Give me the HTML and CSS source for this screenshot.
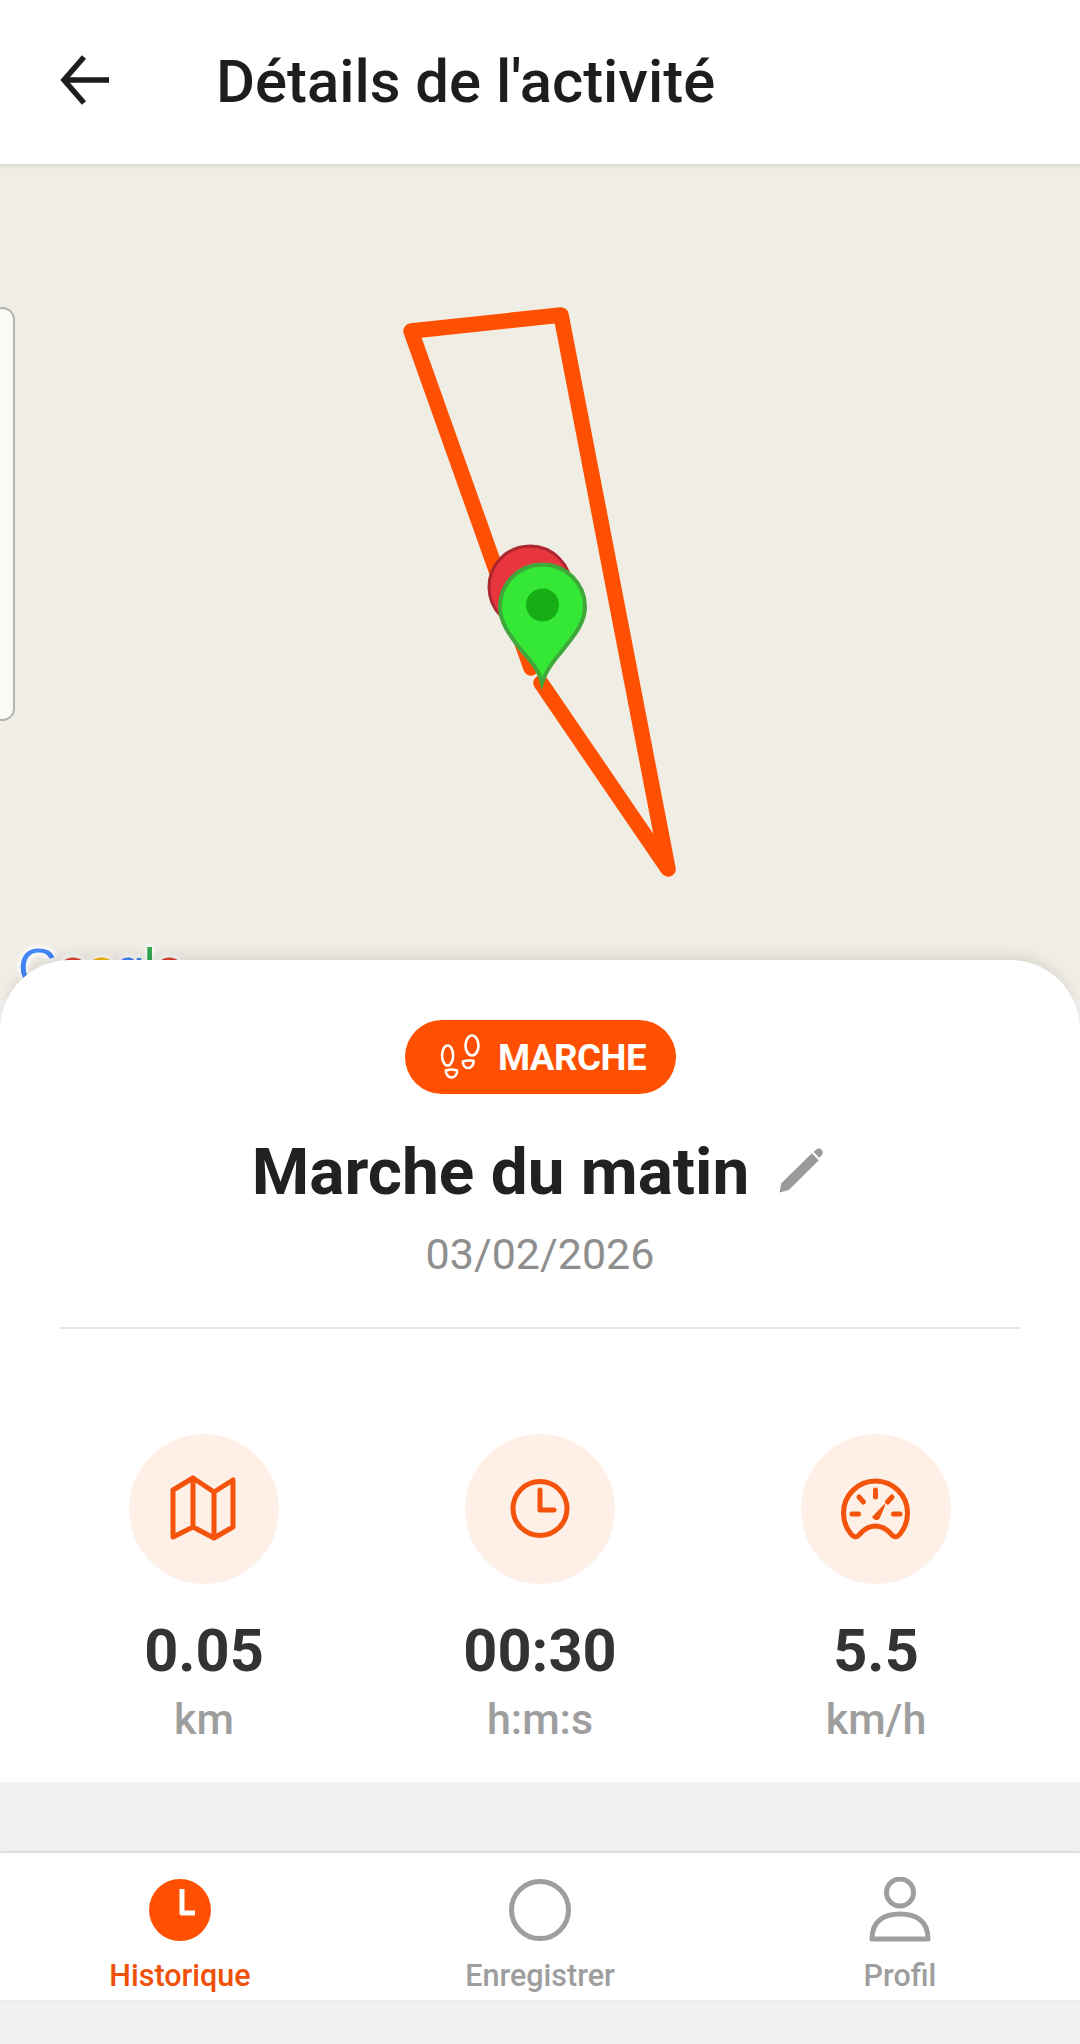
FILE: index.html
```html
<!DOCTYPE html>
<html lang="fr">
<head>
<meta charset="utf-8">
<title>Détails de l'activité</title>
<link rel="stylesheet" href="styles.css">
</head>
<body>
<div class="screen">
  <header class="topbar">
    <svg class="back" viewBox="0 0 50 50" width="50" height="50"><path d="M49 25H4M24 2 4 25l20 23" fill="none" stroke="#1d1d1f" stroke-width="5.500"/></svg>
    <h1 class="page-title">Détails de l'activité</h1>
  </header>

  <section class="map">
    <div class="map-control"></div>
    <div class="google"><span class="g-b">G</span><span class="g-r">o</span><span class="g-y">o</span><span class="g-b">g</span><span class="g-g">l</span><span class="g-r">e</span></div>
    <svg class="map-route" viewBox="0 164 1080 836" width="1080" height="836">
      <path d="M541 683 668 869 561 315 411 331 531 668" fill="none" stroke="#fe5000" stroke-width="15.500" stroke-linejoin="round" stroke-linecap="round"/>
      <circle cx="530" cy="587" r="41" fill="#e8363f" stroke="#ad2730" stroke-width="3"/>
      <path d="M542 683C539 670 530 660 522 651 512 638 500 624 500 607a42.500 42.500 0 0 1 85 0C585 624 572 638 562 651 554 660 546 670 542 683Z" fill="#35e835" stroke="#3ea93a" stroke-width="4"/>
      <circle cx="542.500" cy="605" r="16.500" fill="#16ad16"/>
    </svg>
  </section>

  <main class="panel">
    <div class="badge">
      <svg class="feet" viewBox="0 0 44 48" width="44" height="48" fill="none" stroke="#fff" stroke-width="2.600">
        <ellipse cx="9.600" cy="22.500" rx="5.500" ry="10"/>
        <path d="M8 37.500c3.500-1.200 8-1.200 11 0 .5 3.500-2 7-5.500 7s-6-3.500-5.500-7Z"/>
        <ellipse cx="34" cy="12.500" rx="6.500" ry="10"/>
        <path d="M25 28.500c3.500-1.200 7-1.200 10.500-.8.500 3.500-2 7.300-5.500 7.300s-5.500-3.500-5-6.500Z"/>
      </svg>
      <span class="badge-text">MARCHE</span>
    </div>
    <div class="title-row">
      <h2 class="activity-name">Marche du matin</h2>
      <svg class="pencil" viewBox="0 0 46 44" width="53" height="51"><path d="M4 41l1.500-8L32 7l6 6-26 26Z" fill="#9a9a9a"/><path d="M35 4.500c2-2 4-2 5.500-.5s1.500 3.500-.5 5.500l-1.500 1.500-5-5Z" fill="#9a9a9a"/></svg>
    </div>
    <div class="date">03/02/2026</div>
    <hr class="rule">
    <div class="stats">
      <div class="stat">
        <div class="stat-icon">
          <svg viewBox="0 0 150 150" width="150" height="150" fill="none" stroke="#f4530c" stroke-width="5" stroke-linejoin="round" stroke-linecap="round"><path d="M44 56 64 44l21 14 19-12v47l-19 11-21-11-20 10ZM64 44v49M85 58v46"/></svg>
        </div>
        <div class="stat-value">0.05</div>
        <div class="stat-unit">km</div>
      </div>
      <div class="stat">
        <div class="stat-icon">
          <svg viewBox="0 0 150 150" width="150" height="150" fill="none" stroke="#f4530c" stroke-width="5" stroke-linecap="round" stroke-linejoin="round"><circle cx="75" cy="74.500" r="27"/><path d="M75 56v20h14"/></svg>
        </div>
        <div class="stat-value">00:30</div>
        <div class="stat-unit">h:m:s</div>
      </div>
      <div class="stat">
        <div class="stat-icon">
          <svg viewBox="0 0 150 150" width="150" height="150" fill="none" stroke="#f4530c" stroke-width="5" stroke-linecap="round" stroke-linejoin="round"><path d="M50 100C45 94 42.500 87 42.500 79a32 32 0 0 1 64 0c0 8-2.500 15-7.500 21-2 2.500-5 4-7.500 1.500C87 96 81 92 74.500 92S62 96 57.500 101.500C55 104 52 102.500 50 100Z"/><path d="M74.500 56v7M58 63l4.500 5M91 63l-4.500 5M51 80h6.500M92.500 80H99"/><path d="M72 83 83.500 71 78 84a3.500 3.500 0 0 1-6-1Z" fill="#f4530c" stroke-width="1.500"/></svg>
        </div>
        <div class="stat-value">5.5</div>
        <div class="stat-unit">km/h</div>
      </div>
    </div>
  </main>

  <div class="gap"></div>

  <nav class="tabbar">
    <div class="tab tab-active">
      <svg viewBox="0 0 62 66" width="62" height="66"><circle cx="31" cy="33" r="31" fill="#fe5000"/><path d="M33 12v24h13" fill="none" stroke="#fff" stroke-width="5" stroke-linejoin="round"/></svg>
      <span class="tab-label">Historique</span>
    </div>
    <div class="tab">
      <svg viewBox="0 0 62 66" width="62" height="66"><circle cx="31" cy="33" r="28.500" fill="none" stroke="#9e9e9e" stroke-width="5"/></svg>
      <span class="tab-label">Enregistrer</span>
    </div>
    <div class="tab">
      <svg viewBox="0 0 62 66" width="62" height="66" fill="none" stroke="#9e9e9e" stroke-width="5" stroke-linejoin="round"><circle cx="31" cy="15.500" r="13.500"/><path d="M3 62c0-18 12-25 28-25s28 7 28 25Z"/></svg>
      <span class="tab-label">Profil</span>
    </div>
  </nav>
  <div class="bottom-strip"></div>
</div>
</body>
</html>
```

FILE: styles.css
```css
* { box-sizing: border-box; }
html, body { margin: 0; padding: 0; }
body { font-family: Roboto, "Liberation Sans", sans-serif; background: #f1f1f1; }
.screen { width: 1080px; height: 2044px; display: flex; flex-direction: column; overflow: hidden; }

.topbar { height: 164px; flex: none; background: #fff; display: flex; align-items: center; padding: 0 0 0 60px; gap: 106px; box-shadow: 0 2px 4px rgba(0,0,0,.1); position: relative; z-index: 3; }
.back { flex: none; margin-bottom: 4px; }
.page-title { margin: 2px 0 0; font-size: 59.800px; font-weight: 500; color: #1d1d1f; line-height: 1; }

.map { height: 836px; flex: none; background: #f0ede5; position: relative; }
.map-control { position: absolute; left: -10px; top: 143px; width: 25px; height: 414px; background: #fbfbf7; border: 2px solid #b5b5b0; border-radius: 14px; }
.map-route { position: absolute; left: 0; top: 0; display: block; }
.google { position: absolute; left: 18px; top: 777px; font-family: "Liberation Sans", sans-serif; font-size: 53px; line-height: 1; font-weight: 400; letter-spacing: -1px; text-shadow: 0 0 6px #fff, 0 0 6px #fff, 0 0 6px #fff; }
.g-b { color: #4285f4; }
.g-r { color: #db4437; }
.g-y { color: #f4b400; }
.g-g { color: #34a853; }

.panel { flex: none; height: 822px; margin-top: -40px; background: #fff; border-radius: 70px 70px 0 0; box-shadow: 0 -8px 14px -4px rgba(0,0,0,.1); position: relative; z-index: 2; display: flex; flex-direction: column; align-items: center; padding: 60px 60px 0; }
.badge { width: 271px; height: 74px; background: #fe5000; border-radius: 37px; display: flex; align-items: center; justify-content: center; gap: 16px; padding-left: 4px; }
.feet { flex: none; }
.badge-text { color: #fff; font-size: 36.700px; font-weight: 700; letter-spacing: -.5px; line-height: 1; position: relative; top: 1px; }
.title-row { display: flex; align-items: center; gap: 26px; height: 76px; margin-top: 40px; }
.activity-name { margin: 0; font-size: 65.700px; font-weight: 700; color: #212121; line-height: 1; }
.pencil { flex: none; margin-bottom: 4px; }
.date { margin-top: 19px; font-size: 43px; line-height: 50px; color: #8e8e8e; }
.rule { align-self: stretch; border: 0; height: 2px; background: #e8e8e8; margin: 48px 0 0; }
.stats { align-self: stretch; display: grid; grid-template-columns: repeat(3, 336px); justify-content: center; margin-top: 105px; }
.stat { display: flex; flex-direction: column; align-items: center; }
.stat-icon { width: 150px; height: 150px; border-radius: 50%; background: #fef0e6; }
.stat-icon svg { display: block; }
.stat-value { margin-top: 34px; font-size: 59.500px; line-height: 66px; font-weight: 700; color: #333; }
.stat-unit { margin-top: 12px; font-size: 43px; line-height: 46px; font-weight: 500; color: #9e9e9e; }

.gap { flex: 1; }
.tabbar { flex: none; height: 147px; background: #fff; display: grid; grid-template-columns: repeat(3, 360px); box-shadow: 0 -1px 3px rgba(0,0,0,.14); position: relative; z-index: 2; }
.tab { display: flex; flex-direction: column; align-items: center; padding-top: 24px; gap: 15px; }
.tab svg { display: block; flex: none; }
.tab-label { font-size: 30.500px; line-height: 36px; font-weight: 500; color: #9e9e9e; }
.tab-active .tab-label { color: #ef5109; }
.bottom-strip { flex: none; height: 44px; background: #f1f1f1; }
```
